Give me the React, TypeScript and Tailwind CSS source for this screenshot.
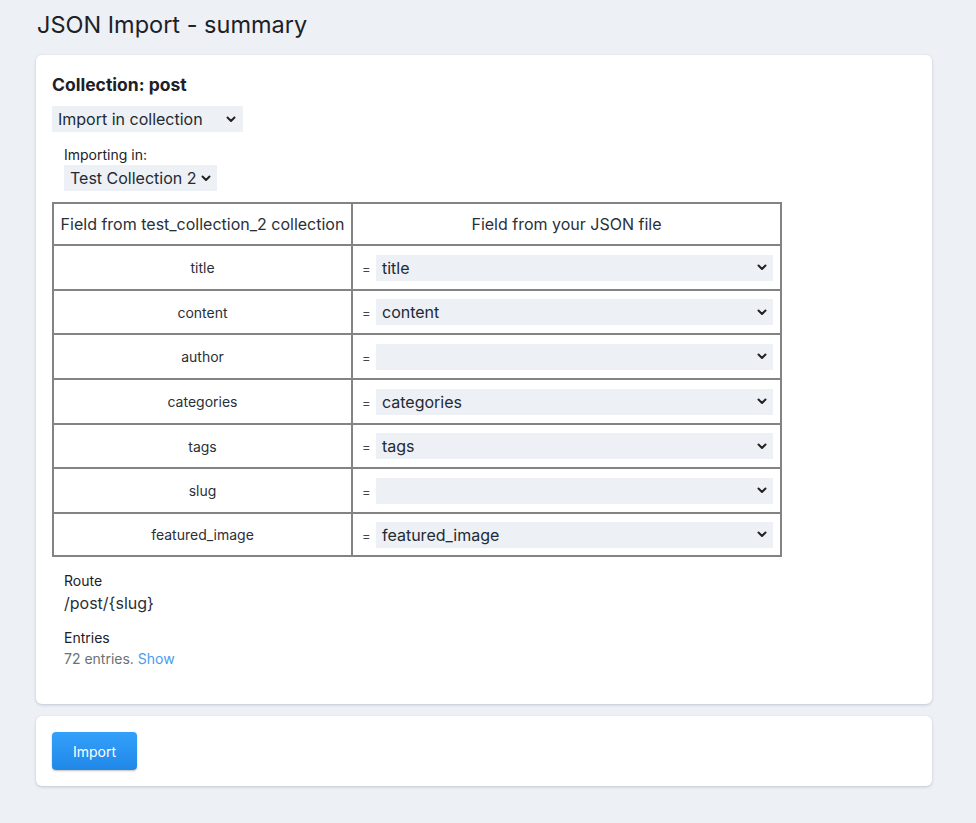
import React from "react";

function Chevron() {
  return (
    <svg width="10" height="7" viewBox="0 0 10 7" className="shrink-0">
      <path d="M1.5 1.5 L5 5 L8.5 1.5" fill="none" stroke="#222" strokeWidth="2" strokeLinecap="round" strokeLinejoin="round" />
    </svg>
  );
}

function FakeSelect({ value, className }: { value: string; className?: string }) {
  return (
    <div className={"flex items-center justify-between bg-[#edf0f5] h-[26px] pl-[6px] pr-[6px] text-[16px] text-[#222a33] " + (className ?? "")}>
      <span className="whitespace-nowrap">{value}</span>
      <Chevron />
    </div>
  );
}

const rows: [string, string, string][] = [
  ["title", "title", "h-[45px]"],
  ["content", "content", "h-[44px]"],
  ["author", "", "h-[45px]"],
  ["categories", "categories", "h-[45px]"],
  ["tags", "tags", "h-[44px]"],
  ["slug", "", "h-[45px]"],
  ["featured_image", "featured_image", "h-[43px]"],
];

export default function App() {
  return (
    <div className="min-h-[823px] bg-[#edf0f5] px-[36px] pt-[10px] pb-[36px] text-[#1f2933]" style={{ fontFamily: "Inter, 'Noto Sans', sans-serif" }}>
      <h1 className="text-[23.5px] leading-[30px] text-[#1c2128] ml-[1px]">JSON Import - summary</h1>
      <div className="mt-[15px] w-[896px] bg-white rounded-[6px] shadow-[0_1px_3px_rgba(60,70,110,0.25)] px-[16px] pt-[18px] pb-[35px]">
        <div className="text-[17.5px] font-bold leading-[24px] text-[#1c2128]">Collection: post</div>
        <FakeSelect value="Import in collection" className="mt-[9px] w-[191px] pr-[7px]" />
        <div className="ml-[12px] mt-[14px]">
          <div className="text-[14px] leading-[18px] text-[#1c2128]">Importing in:</div>
          <FakeSelect value="Test Collection 2" className="mt-[1px] w-[153px] pr-[5px]" />
        </div>
        <table className="mt-[11px] border-collapse w-[730px] border-2 border-[#838383]">
          <thead>
            <tr className="h-[42px]">
              <th className="w-[299px] border-2 border-[#838383] font-normal text-[16px] text-[#2a3038] px-[4px]">Field from test_collection_2 collection</th>
              <th className="border-2 border-[#838383] font-normal text-[16px] text-[#2a3038]">Field from your JSON file</th>
            </tr>
          </thead>
          <tbody>
            {rows.map(([a, b, h]) => (
              <tr key={a} className={h}>
                <td className="border-2 border-[#838383] text-center text-[14px] text-[#2a3038]">{a}</td>
                <td className="border-2 border-[#838383] pl-[9px] pr-[7px]">
                  <div className="flex items-center">
                    <span className="text-[13px] text-[#444] w-[14px] mt-[4px]">=</span>
                    <FakeSelect value={b} className="flex-1" />
                  </div>
                </td>
              </tr>
            ))}
          </tbody>
        </table>
        <div className="ml-[12px] mt-[15px]">
          <div className="text-[14px] leading-[18px] text-[#1c2128]">Route</div>
          <div className="text-[16px] leading-[22px] text-[#2a3038] mt-[2px]">/post/{"{slug}"}</div>
          <div className="text-[14px] leading-[18px] text-[#1c2128] mt-[15px]">Entries</div>
          <div className="text-[14px] leading-[20px] text-[#6b7178] mt-[2px]">
            72 entries. <span className="text-[#4a9cf0]">Show</span>
          </div>
        </div>
      </div>
      <div className="mt-[12px] w-[896px] bg-white rounded-[6px] shadow-[0_1px_3px_rgba(60,70,110,0.25)] p-[16px]">
        <button className="w-[85px] h-[38px] rounded-[4px] bg-gradient-to-b from-[#33a0fb] to-[#2187e7] text-white text-[14px] shadow-[0_1px_2px_rgba(0,0,0,0.25)]">Import</button>
      </div>
    </div>
  );
}
